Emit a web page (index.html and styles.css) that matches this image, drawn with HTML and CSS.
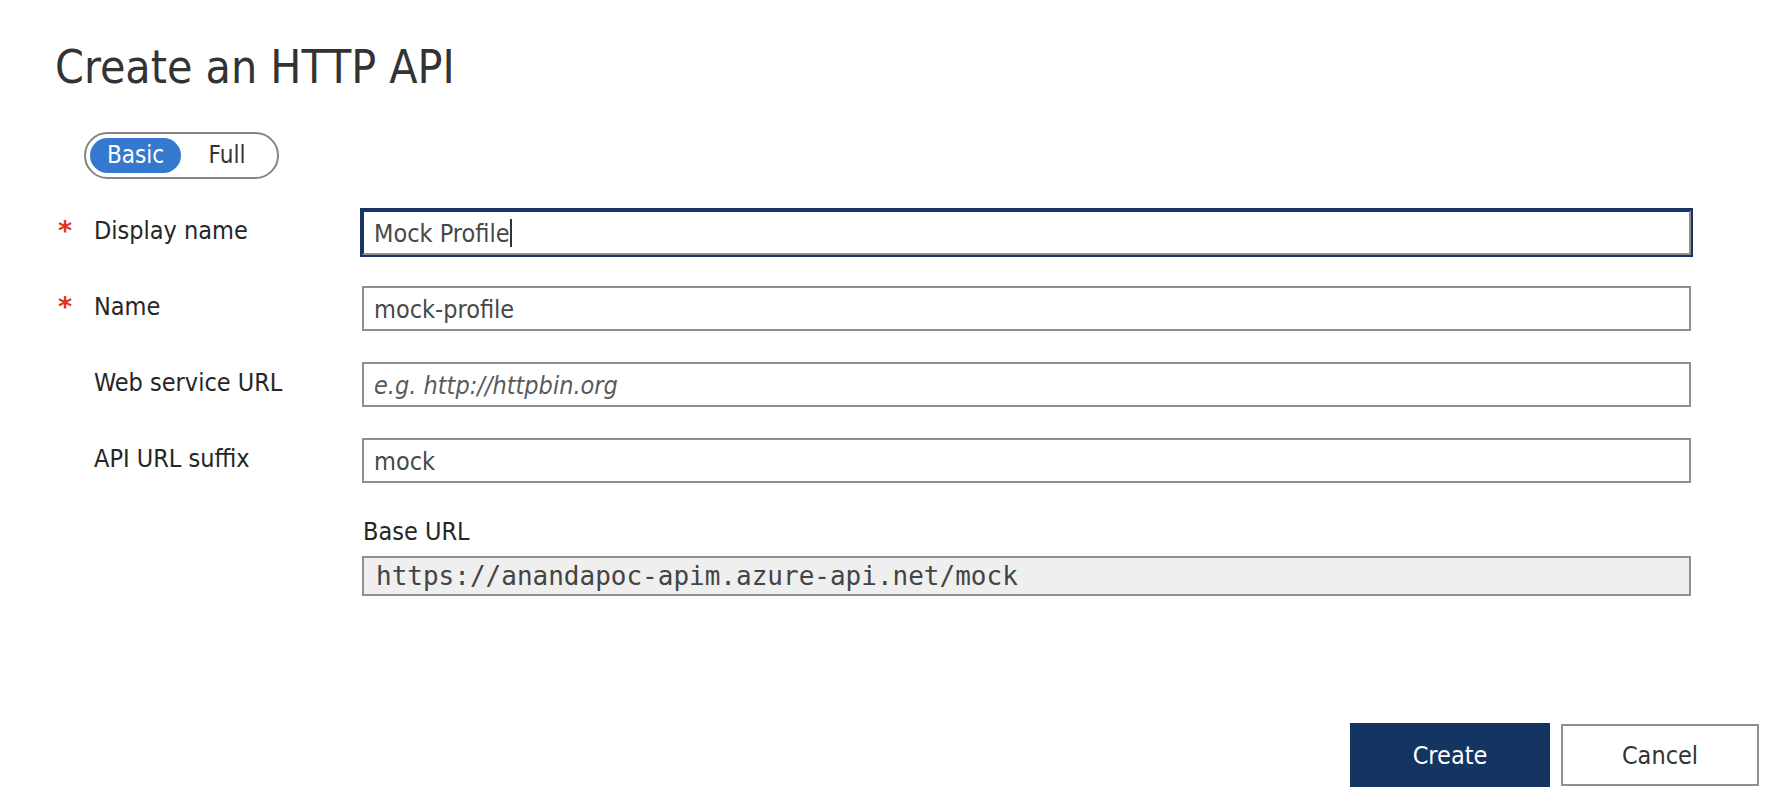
FILE: index.html
```html
<!DOCTYPE html>
<html lang="en">
<head>
<meta charset="utf-8">
<title>Create an HTTP API</title>
<link rel="stylesheet" href="styles.css">
</head>
<body>
<div class="page">
  <h1 class="title">Create an HTTP API</h1>

  <div class="toggle">
    <span class="seg seg-on">Basic</span>
    <span class="seg">Full</span>
  </div>

  <div class="form">
    <div class="row">
      <div class="label"><span class="req">*</span><span class="ltext">Display name</span></div>
      <div class="field field-focus"><span class="val">Mock Profile</span><span class="caret"></span></div>
    </div>
    <div class="row">
      <div class="label"><span class="req">*</span><span class="ltext">Name</span></div>
      <div class="field"><span class="val">mock-profile</span></div>
    </div>
    <div class="row">
      <div class="label"><span class="req"></span><span class="ltext">Web service URL</span></div>
      <div class="field"><span class="ph">e.g. http://httpbin.org</span></div>
    </div>
    <div class="row">
      <div class="label"><span class="req"></span><span class="ltext">API URL suffix</span></div>
      <div class="field"><span class="val">mock</span></div>
    </div>
    <div class="row row-base">
      <div class="label"></div>
      <div class="base">
        <div class="base-label">Base URL</div>
        <div class="base-box">https://anandapoc-apim.azure-api.net/mock</div>
      </div>
    </div>
  </div>

  <div class="actions">
    <button class="btn btn-primary">Create</button>
    <button class="btn btn-secondary">Cancel</button>
  </div>
</div>
</body>
</html>
```

FILE: styles.css
```css
html, body {
  margin: 0;
  padding: 0;
  background: #ffffff;
}

body {
  font-family: "DejaVu Sans Condensed", "DejaVu Sans", sans-serif;
  font-stretch: condensed;
  color: #2b2b2b;
  width: 1784px;
  height: 812px;
  overflow: hidden;
}

.page {
  padding: 44px 25px 0 55px;
  display: flex;
  flex-direction: column;
}

.title {
  margin: 0;
  font-size: 46px;
  font-weight: normal;
  line-height: 46px;
  color: #333333;
}

.toggle {
  margin: 42px 0 0 29px;
  align-self: flex-start;
  display: flex;
  padding: 4px;
  border: 2px solid #858585;
  border-radius: 26px;
  height: 35px;
}

.seg {
  width: 92px;
  height: 35px;
  line-height: 34px;
  text-align: center;
  font-size: 24px;
  color: #333333;
  border-radius: 18px;
}

.seg-on {
  width: 91px;
  background: #3478d0;
  color: #ffffff;
}

.form {
  margin-top: 31px;
  margin-right: 68px;
  display: flex;
  flex-direction: column;
  gap: 31px;
}

.row {
  display: grid;
  grid-template-columns: 307px 1fr;
}

.label {
  display: flex;
  align-items: flex-start;
  font-size: 25px;
  line-height: 25px;
  padding-top: 8px;
}

.req {
  width: 39px;
  padding-left: 3px;
  box-sizing: border-box;
  color: #e3301f;
  font-weight: bold;
  font-size: 27px;
  line-height: 25px;
  font-stretch: normal;
  font-family: "DejaVu Sans", sans-serif;
}

.ltext {
  color: #262626;
}

.field {
  height: 45px;
  box-sizing: border-box;
  border: 2px solid #8f8f8f;
  background: #fff;
  display: flex;
  align-items: center;
  padding: 0 10px;
  font-size: 25px;
  color: #484848;
}

.field-focus {
  border-color: #173462 #8f8f8f #8f8f8f #173462;
  outline: 2px solid #173462;
}

.val {
  padding-top: 2px;
}

.caret {
  width: 2px;
  height: 28px;
  background: #333;
  margin-left: 0;
}

.ph {
  font-style: italic;
  color: #5a5a5a;
  padding-top: 2px;
}

.row-base {
  margin-top: 5px;
}

.base-label {
  font-size: 25px;
  line-height: 25px;
  color: #262626;
  padding-left: 1px;
}

.base-box {
  margin-top: 12px;
  height: 40px;
  box-sizing: border-box;
  border: 2px solid #8f8f8f;
  background: #efefef;
  padding: 0 12px;
  display: flex;
  align-items: center;
  font-family: "DejaVu Sans Mono", monospace;
  font-stretch: normal;
  font-size: 26px;
  color: #444444;
}

.actions {
  margin-top: 127px;
  display: flex;
  justify-content: flex-end;
  gap: 11px;
}

.btn {
  font-family: "DejaVu Sans Condensed", "DejaVu Sans", sans-serif;
  font-stretch: condensed;
  font-size: 25px;
  height: 64px;
  width: 200px;
  box-sizing: border-box;
  cursor: pointer;
}

.btn-primary {
  background: #143462;
  color: #ffffff;
  border: none;
}

.btn-secondary {
  background: #ffffff;
  color: #333333;
  border: 2px solid #8f8f8f;
  width: 198px;
  height: 62px;
  margin-top: 1px;
}
```
